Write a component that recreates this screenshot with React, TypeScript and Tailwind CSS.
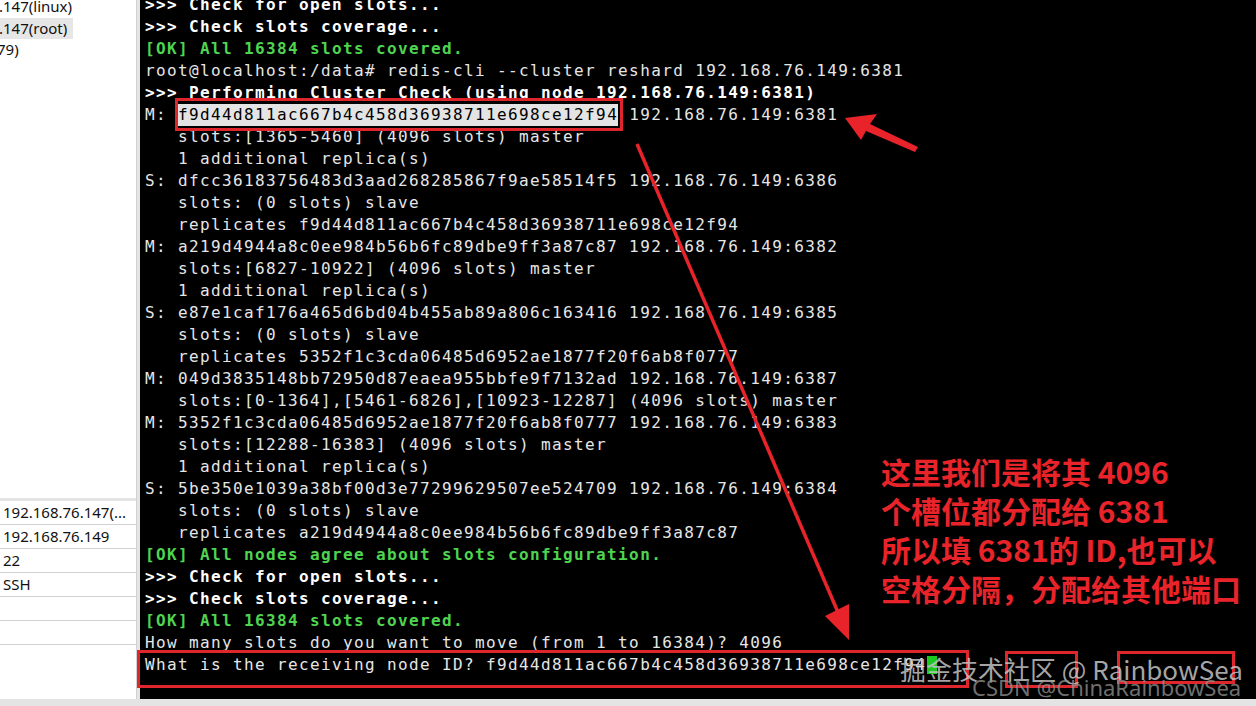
import React from "react";

type Seg = { t: string; s?: "b" | "g" | "hl" };

const ID = "f9d44d811ac667b4c458d36938711e698ce12f94";

const lines: Seg[][] = [
  [{ t: ">>> Check for open slots...", s: "b" }],
  [{ t: ">>> Check slots coverage...", s: "b" }],
  [{ t: "[OK] All 16384 slots covered.", s: "g" }],
  [{ t: "root@localhost:/data# redis-cli --cluster reshard 192.168.76.149:6381" }],
  [{ t: ">>> Performing Cluster Check (using node 192.168.76.149:6381)", s: "b" }],
  [{ t: "M: " }, { t: ID, s: "hl" }, { t: " 192.168.76.149:6381" }],
  [{ t: "   slots:[1365-5460] (4096 slots) master" }],
  [{ t: "   1 additional replica(s)" }],
  [{ t: "S: dfcc36183756483d3aad268285867f9ae58514f5 192.168.76.149:6386" }],
  [{ t: "   slots: (0 slots) slave" }],
  [{ t: "   replicates " + ID }],
  [{ t: "M: a219d4944a8c0ee984b56b6fc89dbe9ff3a87c87 192.168.76.149:6382" }],
  [{ t: "   slots:[6827-10922] (4096 slots) master" }],
  [{ t: "   1 additional replica(s)" }],
  [{ t: "S: e87e1caf176a465d6bd04b455ab89a806c163416 192.168.76.149:6385" }],
  [{ t: "   slots: (0 slots) slave" }],
  [{ t: "   replicates 5352f1c3cda06485d6952ae1877f20f6ab8f0777" }],
  [{ t: "M: 049d3835148bb72950d87eaea955bbfe9f7132ad 192.168.76.149:6387" }],
  [{ t: "   slots:[0-1364],[5461-6826],[10923-12287] (4096 slots) master" }],
  [{ t: "M: 5352f1c3cda06485d6952ae1877f20f6ab8f0777 192.168.76.149:6383" }],
  [{ t: "   slots:[12288-16383] (4096 slots) master" }],
  [{ t: "   1 additional replica(s)" }],
  [{ t: "S: 5be350e1039a38bf00d3e77299629507ee524709 192.168.76.149:6384" }],
  [{ t: "   slots: (0 slots) slave" }],
  [{ t: "   replicates a219d4944a8c0ee984b56b6fc89dbe9ff3a87c87" }],
  [{ t: "[OK] All nodes agree about slots configuration.", s: "g" }],
  [{ t: ">>> Check for open slots...", s: "b" }],
  [{ t: ">>> Check slots coverage...", s: "b" }],
  [{ t: "[OK] All 16384 slots covered.", s: "g" }],
  [{ t: "How many slots do you want to move (from 1 to 16384)? 4096" }],
  [{ t: "What is the receiving node ID? " + ID }],
];

const segClass = (s?: Seg["s"]) => {
  if (s === "b") return "font-bold text-white";
  if (s === "g") return "font-bold text-[#4fd44f]";
  if (s === "hl") return "bg-[#e4e4e4] text-black";
  return "text-[#e6e6e6]";
};

const tableRows = ["192.168.76.147(...", "192.168.76.149", "22", "SSH", "", ""];

const Sidebar = () => (
  <div className="w-[137px] h-full bg-white border-r border-[#d2d2d2] flex flex-col overflow-hidden text-[15px] text-[#111] font-['Noto_Sans',sans-serif]">
    <div className="-mt-[4px] flex flex-col">
      <div className="h-[21.5px] leading-[21.5px] -ml-[1px]">.147(linux)</div>
      <div className="h-[21.5px] leading-[21.5px] -ml-[1px] w-[74px] bg-[#e6e6e6]">.147(root)</div>
      <div className="h-[21.5px] leading-[21.5px] -ml-[3px]">79)</div>
    </div>
    <div className="flex-1" />
    <div className="h-[3px] bg-[#e4e4e4]" />
    {tableRows.map((r, i) => (
      <div
        key={i}
        className="h-[24px] leading-[23px] pl-[3px] text-[15px] border-b border-[#d0d0d0] whitespace-nowrap"
      >
        {r}
      </div>
    ))}
    <div className="h-[54px]" />
  </div>
);

const Terminal = () => (
  <div className="flex-1 h-full bg-black ml-[3px] overflow-hidden pl-[5px]">
    <div className="-mt-[6px] font-['DejaVu_Sans_Mono',monospace] text-[16px] leading-[22px] tracking-[1.37px] whitespace-pre">
      {lines.map((ln, i) => (
        <div key={i} className="h-[22px] flex items-center">
          {ln.map((sg, j) => (
            <span key={j} className={segClass(sg.s)}>
              {sg.t}
            </span>
          ))}
          {i === lines.length - 1 && (
            <span className="inline-block w-[10px] h-[18px] bg-[#1ec81e] ml-[1px]" />
          )}
        </div>
      ))}
    </div>
  </div>
);

const Box = ({ cls }: { cls: string }) => (
  <div className={"absolute border-[3px] border-[#df262c] " + cls} />
);

const App: React.FC = () => {
  return (
    <div className="relative w-[1256px] h-[706px] overflow-hidden bg-[#e4e4e4]">
      <div className="flex h-[699px]">
        <Sidebar />
        <Terminal />
      </div>

      {/* red annotation boxes */}
      <Box cls="left-[175px] top-[98px] w-[448px] h-[33px]" />
      <Box cls="left-[137px] top-[650px] w-[832px] h-[38px]" />
      <Box cls="left-[1005px] top-[651px] w-[73px] h-[37px]" />
      <Box cls="left-[1117px] top-[651px] w-[118px] h-[33px]" />

      {/* arrows */}
      <svg
        className="absolute inset-0 pointer-events-none"
        width="1256"
        height="706"
        viewBox="0 0 1256 706"
      >
        <polygon
          points="845,118 877,114 870,124 918,147 915,152 866,131 861,140"
          fill="#e8232a"
        />
        <line x1="637" y1="144" x2="840" y2="617" stroke="#e8232a" strokeWidth="3.5" />
        <polygon points="849,640 825,616 849,604" fill="#e8232a" />
      </svg>

      {/* explanation */}
      <div className="absolute left-[881px] top-[452px] font-['Noto_Sans_CJK_SC',sans-serif] font-bold text-[30px] leading-[39px] text-[#e8242a] whitespace-nowrap">
        <div>这里我们是将其 4096</div>
        <div>个槽位都分配给 6381</div>
        <div>所以填 6381的 ID,也可以</div>
        <div>空格分隔，分配给其他端口</div>
      </div>

      {/* watermarks */}
      <div className="absolute left-[900px] top-[652px] font-['Noto_Sans_CJK_SC',sans-serif] text-[26px] leading-[34px] text-[#c4c4c4]/85 whitespace-nowrap">
        掘金技术社区 @ RainbowSea
      </div>
      <div className="absolute left-[972px] top-[673px] font-['Noto_Sans','Noto_Sans_CJK_SC',sans-serif] text-[22px] leading-[28px] text-[#8e8e8e]/80 whitespace-nowrap">
        CSDN @ChinaRainbowSea
      </div>
    </div>
  );
};

export default App;
